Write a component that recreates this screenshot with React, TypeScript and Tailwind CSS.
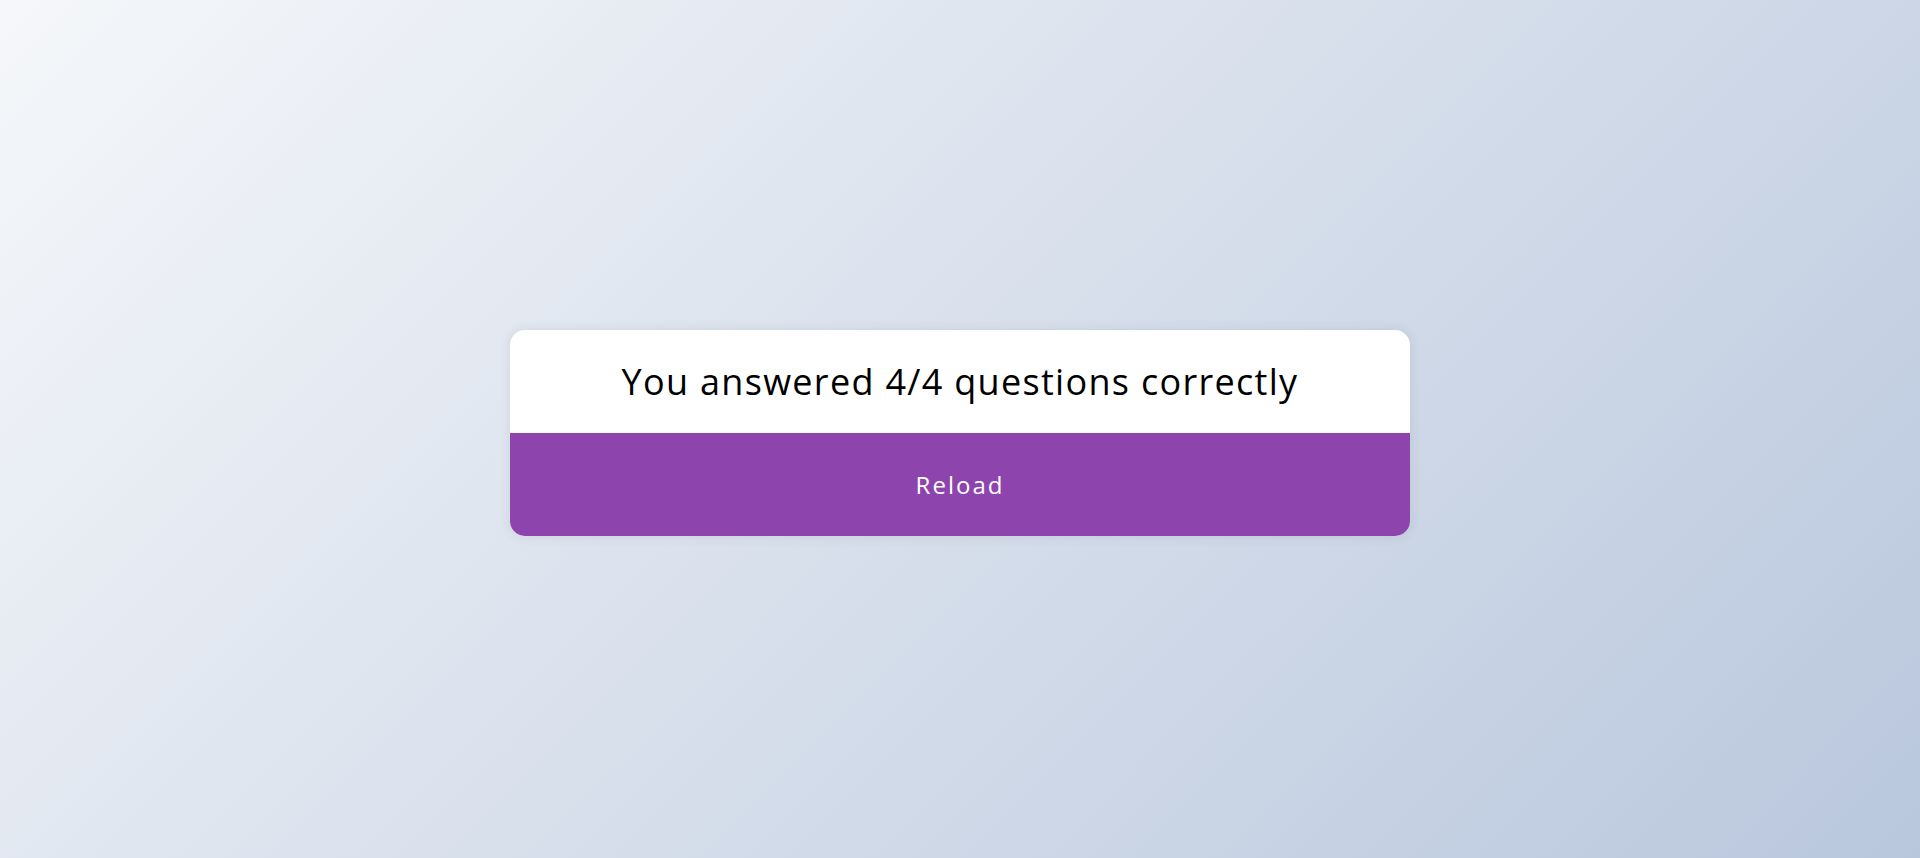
const App = () => {
  return (
    <div
      className="h-screen w-full pt-2 flex items-center justify-center bg-[linear-gradient(135deg,#f5f7fa_0%,#b9c7dd_100%)]"
      style={{ fontFamily: '"Open Sans", "Noto Sans", sans-serif' }}
    >
      <div className="w-[900px] bg-white rounded-[15px] overflow-hidden shadow-[0_0_10px_2px_rgba(100,100,100,0.1)]">
        <div className="h-[103px] flex items-center justify-center">
          <h2 className="text-[36px] font-medium tracking-[1.3px] text-black m-0">You answered 4/4 questions correctly</h2>
        </div>
        <button className="w-full h-[103px] bg-[#8e44ad] text-white text-[24px] tracking-[2px] border-none cursor-pointer">
          Reload
        </button>
      </div>
    </div>
  );
};

export default App;
